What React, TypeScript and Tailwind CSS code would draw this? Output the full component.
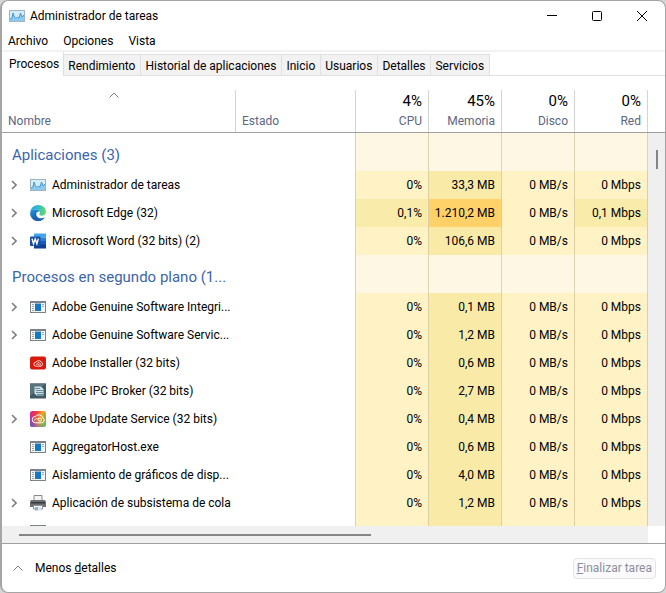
import { useState } from 'react';

type IconName = 'monitor' | 'edge' | 'word' | 'exe' | 'installer' | 'ipc' | 'cloud' | 'printer';

type Process = {
  name: string;
  icon: IconName;
  expandable?: boolean;
  cpu: string;
  memory: string;
  disk: string;
  network: string;
};

const apps: Process[] = [
  { name: 'Administrador de tareas', icon: 'monitor', expandable: true, cpu: '0%', memory: '33,3 MB', disk: '0 MB/s', network: '0 Mbps' },
  { name: 'Microsoft Edge (32)', icon: 'edge', expandable: true, cpu: '0,1%', memory: '1.210,2 MB', disk: '0 MB/s', network: '0,1 Mbps' },
  { name: 'Microsoft Word (32 bits) (2)', icon: 'word', expandable: true, cpu: '0%', memory: '106,6 MB', disk: '0 MB/s', network: '0 Mbps' }
];

const background: Process[] = [
  { name: 'Adobe Genuine Software Integri...', icon: 'exe', expandable: true, cpu: '0%', memory: '0,1 MB', disk: '0 MB/s', network: '0 Mbps' },
  { name: 'Adobe Genuine Software Servic...', icon: 'exe', expandable: true, cpu: '0%', memory: '1,2 MB', disk: '0 MB/s', network: '0 Mbps' },
  { name: 'Adobe Installer (32 bits)', icon: 'installer', cpu: '0%', memory: '0,6 MB', disk: '0 MB/s', network: '0 Mbps' },
  { name: 'Adobe IPC Broker (32 bits)', icon: 'ipc', cpu: '0%', memory: '2,7 MB', disk: '0 MB/s', network: '0 Mbps' },
  { name: 'Adobe Update Service (32 bits)', icon: 'cloud', expandable: true, cpu: '0%', memory: '0,4 MB', disk: '0 MB/s', network: '0 Mbps' },
  { name: 'AggregatorHost.exe', icon: 'exe', cpu: '0%', memory: '0,6 MB', disk: '0 MB/s', network: '0 Mbps' },
  { name: 'Aislamiento de gráficos de disp...', icon: 'exe', cpu: '0%', memory: '4,0 MB', disk: '0 MB/s', network: '0 Mbps' },
  { name: 'Aplicación de subsistema de cola', icon: 'printer', expandable: true, cpu: '0%', memory: '1,2 MB', disk: '0 MB/s', network: '0 Mbps' }
];

const tabs = ['Procesos', 'Rendimiento', 'Historial de aplicaciones', 'Inicio', 'Usuarios', 'Detalles', 'Servicios'];

const usage = [
  { label: 'CPU', value: '4%' },
  { label: 'Memoria', value: '45%' },
  { label: 'Disco', value: '0%' },
  { label: 'Red', value: '0%' }
];

function ProcessIcon({ name }: { name: IconName }) {
  return (
    <svg viewBox="0 0 16 16" className="w-4 h-4 shrink-0" aria-hidden="true">
      {name === 'monitor' && (
        <>
          <rect x="0.5" y="2.5" width="15" height="11" fill="#d6edf9" stroke="#9fb4c2" />
          <path d="M1 11 L3 10 L4 5 L5.5 9 L7 10.5 L8.5 9 L10 10 L11.5 5 L13 9 L15 7 V13 H1Z" fill="#8ccaef" />
          <path d="M1 11 L3 10 L4 5 L5.5 9 L7 10.5 L8.5 9 L10 10 L11.5 5 L13 9 L15 7" fill="none" stroke="#3b93cf" strokeWidth="0.9" />
        </>
      )}
      {name === 'edge' && (
        <>
          <defs>
            <linearGradient id="edgeTop" x1="0" y1="0.4" x2="1" y2="0.5">
              <stop offset="0" stopColor="#2aa5dc" />
              <stop offset="0.5" stopColor="#2fbfc8" />
              <stop offset="1" stopColor="#6fdc55" />
            </linearGradient>
            <linearGradient id="edgeBody" x1="0" y1="0" x2="0.6" y2="1">
              <stop offset="0" stopColor="#1f95dc" />
              <stop offset="1" stopColor="#124f9e" />
            </linearGradient>
          </defs>
          <path d="M0.2 7.6 C0.5 3.2 4 0.1 8.2 0.1 C12.8 0.1 16 3.3 16 6.8 C16 9.3 14 10.8 11.8 10.8 C10.3 10.8 9.2 10.3 9.2 9.6 C9.2 9.1 10 8.8 10 7.6 C10 6 8.3 4.6 5.8 4.6 C3 4.6 1 6 0.2 7.6Z" fill="url(#edgeTop)" />
          <path d="M0.1 8.2 C0.3 5.9 2.6 4.5 5.5 4.5 C7.8 4.5 9.3 5.5 9.8 6.7 C8 5.9 6.2 7.2 6.2 9.2 C6.2 11.6 8.5 13.4 11.2 13.4 C12.6 13.4 13.8 12.9 14.7 12.3 C13.5 14.5 11 16 8 16 C3.6 16 0 12.5 0.1 8.2Z" fill="url(#edgeBody)" />
          <path d="M6.2 8.4 C5.3 12 8.3 14.3 11.5 13.7 C13 13.4 14 12.9 14.7 12.3 C13.3 14.8 10.8 16 8.3 16 C4.9 15.6 3.8 10.8 6.2 8.4Z" fill="#1b62b5" />
        </>
      )}
      {name === 'word' && (
        <>
          <path d="M4 0.5 H16 V4.5 H4Z" fill="#41a5ee" />
          <path d="M4 4.5 H16 V8 H4Z" fill="#2b7cd3" />
          <path d="M4 8 H16 V12 H4Z" fill="#185abd" />
          <path d="M4 11.5 H16 V15.5 H4Z" fill="#103f91" />
          <rect x="0" y="3.5" width="10.5" height="9.5" rx="0.8" fill="#154fa8" />
          <path d="M2 5.6 L3.5 10.8 L5.2 6 L6.9 10.8 L8.4 5.6" fill="none" stroke="#fff" strokeWidth="1.4" />
        </>
      )}
      {name === 'exe' && (
        <>
          <path d="M0 2 H16 V14 H0Z" fill="#7d8286" />
          <path d="M1 4 H15 V13 H1Z" fill="#f4f6f7" />
          <path d="M5 4.5 H11 V12 H5Z" fill="#1479c4" />
          <path d="M2 5.5 H4 M2 7.5 H4 M2 9.5 H4 M2 11.5 H4 M12 5.5 H14 M12 7.5 H14" stroke="#9aa7b0" />
        </>
      )}
      {name === 'installer' && (
        <>
          <rect x="0" y="1.5" width="16" height="13" rx="2" fill="#d81a0c" />
          <path d="M6 11.2 A2 2 0 0 1 5.8 7.2 A3.5 3.5 0 0 1 12 8 A2 2 0 0 1 11 11.2 Z M6 9.5 Q7 8 8.5 9.5 T11 9.5 M7.5 8 Q9 6.5 10.5 9" fill="none" stroke="#fff" strokeWidth="0.8" />
        </>
      )}
      {name === 'ipc' && (
        <>
          <rect width="16" height="15" y="0.5" fill="#3f5a66" />
          <path d="M0 0.5 H16 L0 13Z" fill="#58737e" />
          <path d="M4.5 3.5 H11 L13.5 6 V12.5 H6.5 L4.5 10.5Z" fill="#c9e2e8" />
          <path d="M5 5.5 H10 M6 7.5 H13 M6 9.5 H13 M7 11.5 H13" stroke="#3f6472" strokeWidth="0.7" />
        </>
      )}
      {name === 'cloud' && (
        <>
          <defs>
            <linearGradient id="ccWarm" x1="0" y1="0.3" x2="1" y2="0.7">
              <stop offset="0" stopColor="#e3218c" />
              <stop offset="0.3" stopColor="#ec4238" />
              <stop offset="0.6" stopColor="#f2a024" />
              <stop offset="1" stopColor="#62bf5a" />
            </linearGradient>
            <linearGradient id="ccCool" x1="0.7" y1="0.3" x2="0" y2="1">
              <stop offset="0.3" stopColor="#6a4fd8" stopOpacity="0" />
              <stop offset="1" stopColor="#5a58dc" />
            </linearGradient>
          </defs>
          <rect width="16" height="16" rx="2.5" fill="url(#ccWarm)" />
          <rect width="16" height="16" rx="2.5" fill="url(#ccCool)" />
          <path d="M5.5 11.8 A3.2 3.2 0 0 1 5.5 5.4 A4.3 4.3 0 0 1 13 7 A2.6 2.6 0 0 1 11.5 11.8 Z M4.5 9.5 C5 7 7 7 8.5 9 S11.5 10 11.5 8.5 S9.5 6.5 8 8" fill="none" stroke="#fff" strokeWidth="1" />
        </>
      )}
      {name === 'printer' && (
        <>
          <path d="M4 0.5 H12 V6 H4Z" fill="#f4f4f4" stroke="#8a8a8a" />
          <path d="M1 5 H15 L16 7 V12 H0 V7Z" fill="#6c7074" />
          <path d="M1 7 H15 V8.5 H1Z" fill="#393c3f" />
          <path d="M3.5 10.5 H12.5 V14 H3.5Z" fill="#fff" stroke="#8a8a8a" />
          <path d="M5 12 H8 V15.5 H5Z" fill="#8fb4d0" />
          <path d="M8 12 H11 V15.5 H8Z" fill="#d7e5ee" />
        </>
      )}
    </svg>
  );
}

function Chevron({ up }: { up?: boolean }) {
  return up ? (
    <svg viewBox="0 0 10 6" className="w-[10px] h-[6px] shrink-0" fill="none" stroke="#7a7a7a" aria-hidden="true">
      <path d="M0.5 5.5 L5 1 L9.5 5.5" />
    </svg>
  ) : (
    <svg viewBox="0 0 6 10" className="w-[6px] h-[10px]" fill="none" stroke="#808080" strokeWidth="1.6" aria-hidden="true">
      <path d="M1 1 L5 5 L1 9" />
    </svg>
  );
}

function GroupRow({ title }: { title: string }) {
  return (
    <tr className="h-[38px]">
      <th scope="rowgroup" className="pl-[10px] pt-[6px] text-left text-[15px] leading-6 font-normal text-[#3a65ae] whitespace-nowrap">
        {title}
      </th>
      <td className="border-r border-[#d9d3b4]" />
      {usage.map((column) => (
        <td key={column.label} className="bg-[#fef7e4] border-r border-[#ddd5b2]" />
      ))}
    </tr>
  );
}

function ProcessRow({ process }: { process: Process }) {
  const cpuBusy = process.cpu.startsWith('0,');
  const networkBusy = process.network.startsWith('0,');
  const memoryBusy = process.memory.includes('.');

  return (
    <tr className="h-7 text-right whitespace-nowrap">
      <td className="text-left">
        <div className="flex items-center">
          <div className="w-7 shrink-0 flex">
            {process.expandable && (
              <button type="button" aria-label={`Expandir ${process.name}`} className="ml-2 p-px">
                <Chevron />
              </button>
            )}
          </div>
          <ProcessIcon name={process.icon} />
          <span className="ml-[6px]">{process.name}</span>
        </div>
      </td>
      <td className="border-r border-[#d9d3b4]" />
      <td className={`pr-[6px] border-r border-[#ddd0a0] ${cpuBusy ? 'bg-[#f9ebaa]' : 'bg-[#fff3c6]'}`}>{process.cpu}</td>
      <td className={`pr-[6px] border-r border-[#ddd0a0] ${memoryBusy ? 'bg-[#ffd168]' : 'bg-[#f9eaa8]'}`}>{process.memory}</td>
      <td className="pr-[6px] border-r border-[#ddd0a0] bg-[#fff3c6]">{process.disk}</td>
      <td className={`pr-[6px] border-r border-[#ddd0a0] ${networkBusy ? 'bg-[#f9ebaa]' : 'bg-[#fff3c6]'}`}>{process.network}</td>
    </tr>
  );
}

export default function App() {
  const [activeTab, setActiveTab] = useState('Procesos');

  return (
    <div className="h-screen bg-[#d6d6d6] font-[Roboto,sans-serif] text-xs text-black">
      <div className="h-full flex flex-col overflow-hidden rounded-lg border border-l-2 border-[#a5a5a5] bg-white">
        {/* Title bar */}
        <header className="h-[29px] shrink-0 flex items-center pl-[7px]">
          <ProcessIcon name="monitor" />
          <h1 className="ml-[5px] flex-1">Administrador de tareas</h1>
          <button type="button" aria-label="Minimizar" className="w-[46px] h-full flex items-center justify-center">
            <svg viewBox="0 0 10 10" className="w-[10px] h-[10px]" stroke="#000">
              <path d="M0 4.5 H10" />
            </svg>
          </button>
          <button type="button" aria-label="Maximizar" className="w-11 h-full flex items-center justify-center">
            <svg viewBox="0 0 10 10" className="w-[10px] h-[10px]" stroke="#000" fill="none">
              <rect x="0.5" y="0.5" width="9" height="9" rx="1" />
            </svg>
          </button>
          <button type="button" aria-label="Cerrar" className="w-[46px] h-full flex items-center justify-center">
            <svg viewBox="0 0 10 10" className="w-[10px] h-[10px]" stroke="#000">
              <path d="M0 0 L10 10 M10 0 L0 10" />
            </svg>
          </button>
        </header>

        <nav className="h-[22px] shrink-0 flex items-end gap-[15px] px-[6px] pb-px border-b-2 border-[#f2f2f2]">
          <button type="button">Archivo</button>
          <button type="button">Opciones</button>
          <button type="button">Vista</button>
        </nav>

        {/* Tabs */}
        <div role="tablist" className="h-6 shrink-0 flex items-end border-b border-[#e0e0e0]">
          {tabs.map((tab) => (
            <button
              key={tab}
              type="button"
              role="tab"
              aria-selected={tab === activeTab}
              onClick={() => setActiveTab(tab)}
              className={
                tab === activeTab
                  ? 'h-6 pl-[7px] pr-1 -mb-px bg-white border-r border-[#e0e0e0] whitespace-nowrap'
                  : 'h-[21px] pl-1 pr-[5px] pt-px bg-[#f3f2f3] border-t border-r border-[#e0e0e0] whitespace-nowrap'
              }
            >
              {tab}
            </button>
          ))}
        </div>

        {/* Process list */}
        <main className="flex-1 min-h-0 flex overflow-hidden">
          <div className="flex-1 min-w-0 overflow-hidden">
            <table className="w-full table-fixed border-separate border-spacing-0">
              <colgroup>
                <col />
                <col className="w-[120px]" />
                <col className="w-[73px]" />
                <col className="w-[73px]" />
                <col className="w-[73px]" />
                <col className="w-[73px]" />
              </colgroup>
              <thead className="text-[#5b6785]">
                <tr>
                  <th scope="col" className="p-0 h-[57px] align-bottom text-left font-normal border-b border-[#a0a0a0]">
                    <div className="h-[42px] flex flex-col justify-between pt-[2px] pb-[3px] pl-[6px] border-r border-[#d4d4d4]">
                      <span className="self-center pr-4"><Chevron up /></span>
                      Nombre
                    </div>
                  </th>
                  <th scope="col" className="p-0 align-bottom text-left font-normal border-b border-[#a0a0a0]">
                    <div className="h-[42px] flex items-end pb-[3px] pl-[6px] border-r border-[#d4d4d4]">Estado</div>
                  </th>
                  {usage.map((column) => (
                    <th key={column.label} scope="col" className="p-0 align-bottom text-right font-normal border-b border-[#a0a0a0]">
                      <div className="h-[42px] flex flex-col justify-between pt-px pb-[3px] pr-[6px] border-r border-[#d4d4d4]">
                        <span className="text-[15px] leading-5 text-black">{column.value}</span>
                        <span>{column.label}</span>
                      </div>
                    </th>
                  ))}
                </tr>
              </thead>
              <tbody>
                <GroupRow title="Aplicaciones (3)" />
                {apps.map((process) => (
                  <ProcessRow key={process.name} process={process} />
                ))}
              </tbody>
              <tbody>
                <GroupRow title="Procesos en segundo plano (1..." />
                {background.map((process) => (
                  <ProcessRow key={process.name} process={process} />
                ))}
                <ProcessRow process={{ name: '', icon: 'exe', cpu: '', memory: '', disk: '', network: '' }} />
              </tbody>
            </table>
          </div>
          <div className="w-[17px] shrink-0 flex flex-col">
            <div className="h-[57px] border-b border-[#a0a0a0]" />
            <div className="flex-1 pt-[17px] bg-[#f0eff0]">
              <div className="ml-2 w-[2px] h-[19px] bg-[#858585]" />
            </div>
          </div>
        </main>
        <div className="h-[18px] shrink-0 flex border-b border-[#a0a0a0]">
          <div className="flex-1 flex items-center pl-[17px] bg-[#f0f0f0]">
            <div className="w-[56%] h-[2px] bg-[#858585]" />
          </div>
          <div className="w-[17px]" />
        </div>

        <footer className="h-12 shrink-0 flex items-center justify-between pl-[11px] pr-[9px]">
          <button type="button" className="flex items-center gap-3">
            <Chevron up />
            <span>Menos <u>d</u>etalles</span>
          </button>
          <button type="button" disabled className="h-[21px] px-[3px] rounded-sm border border-[#e3e3ea] bg-[#fafafc] text-[#8d8d9e]">
            <u>F</u>inalizar tarea
          </button>
        </footer>
      </div>
    </div>
  );
}
